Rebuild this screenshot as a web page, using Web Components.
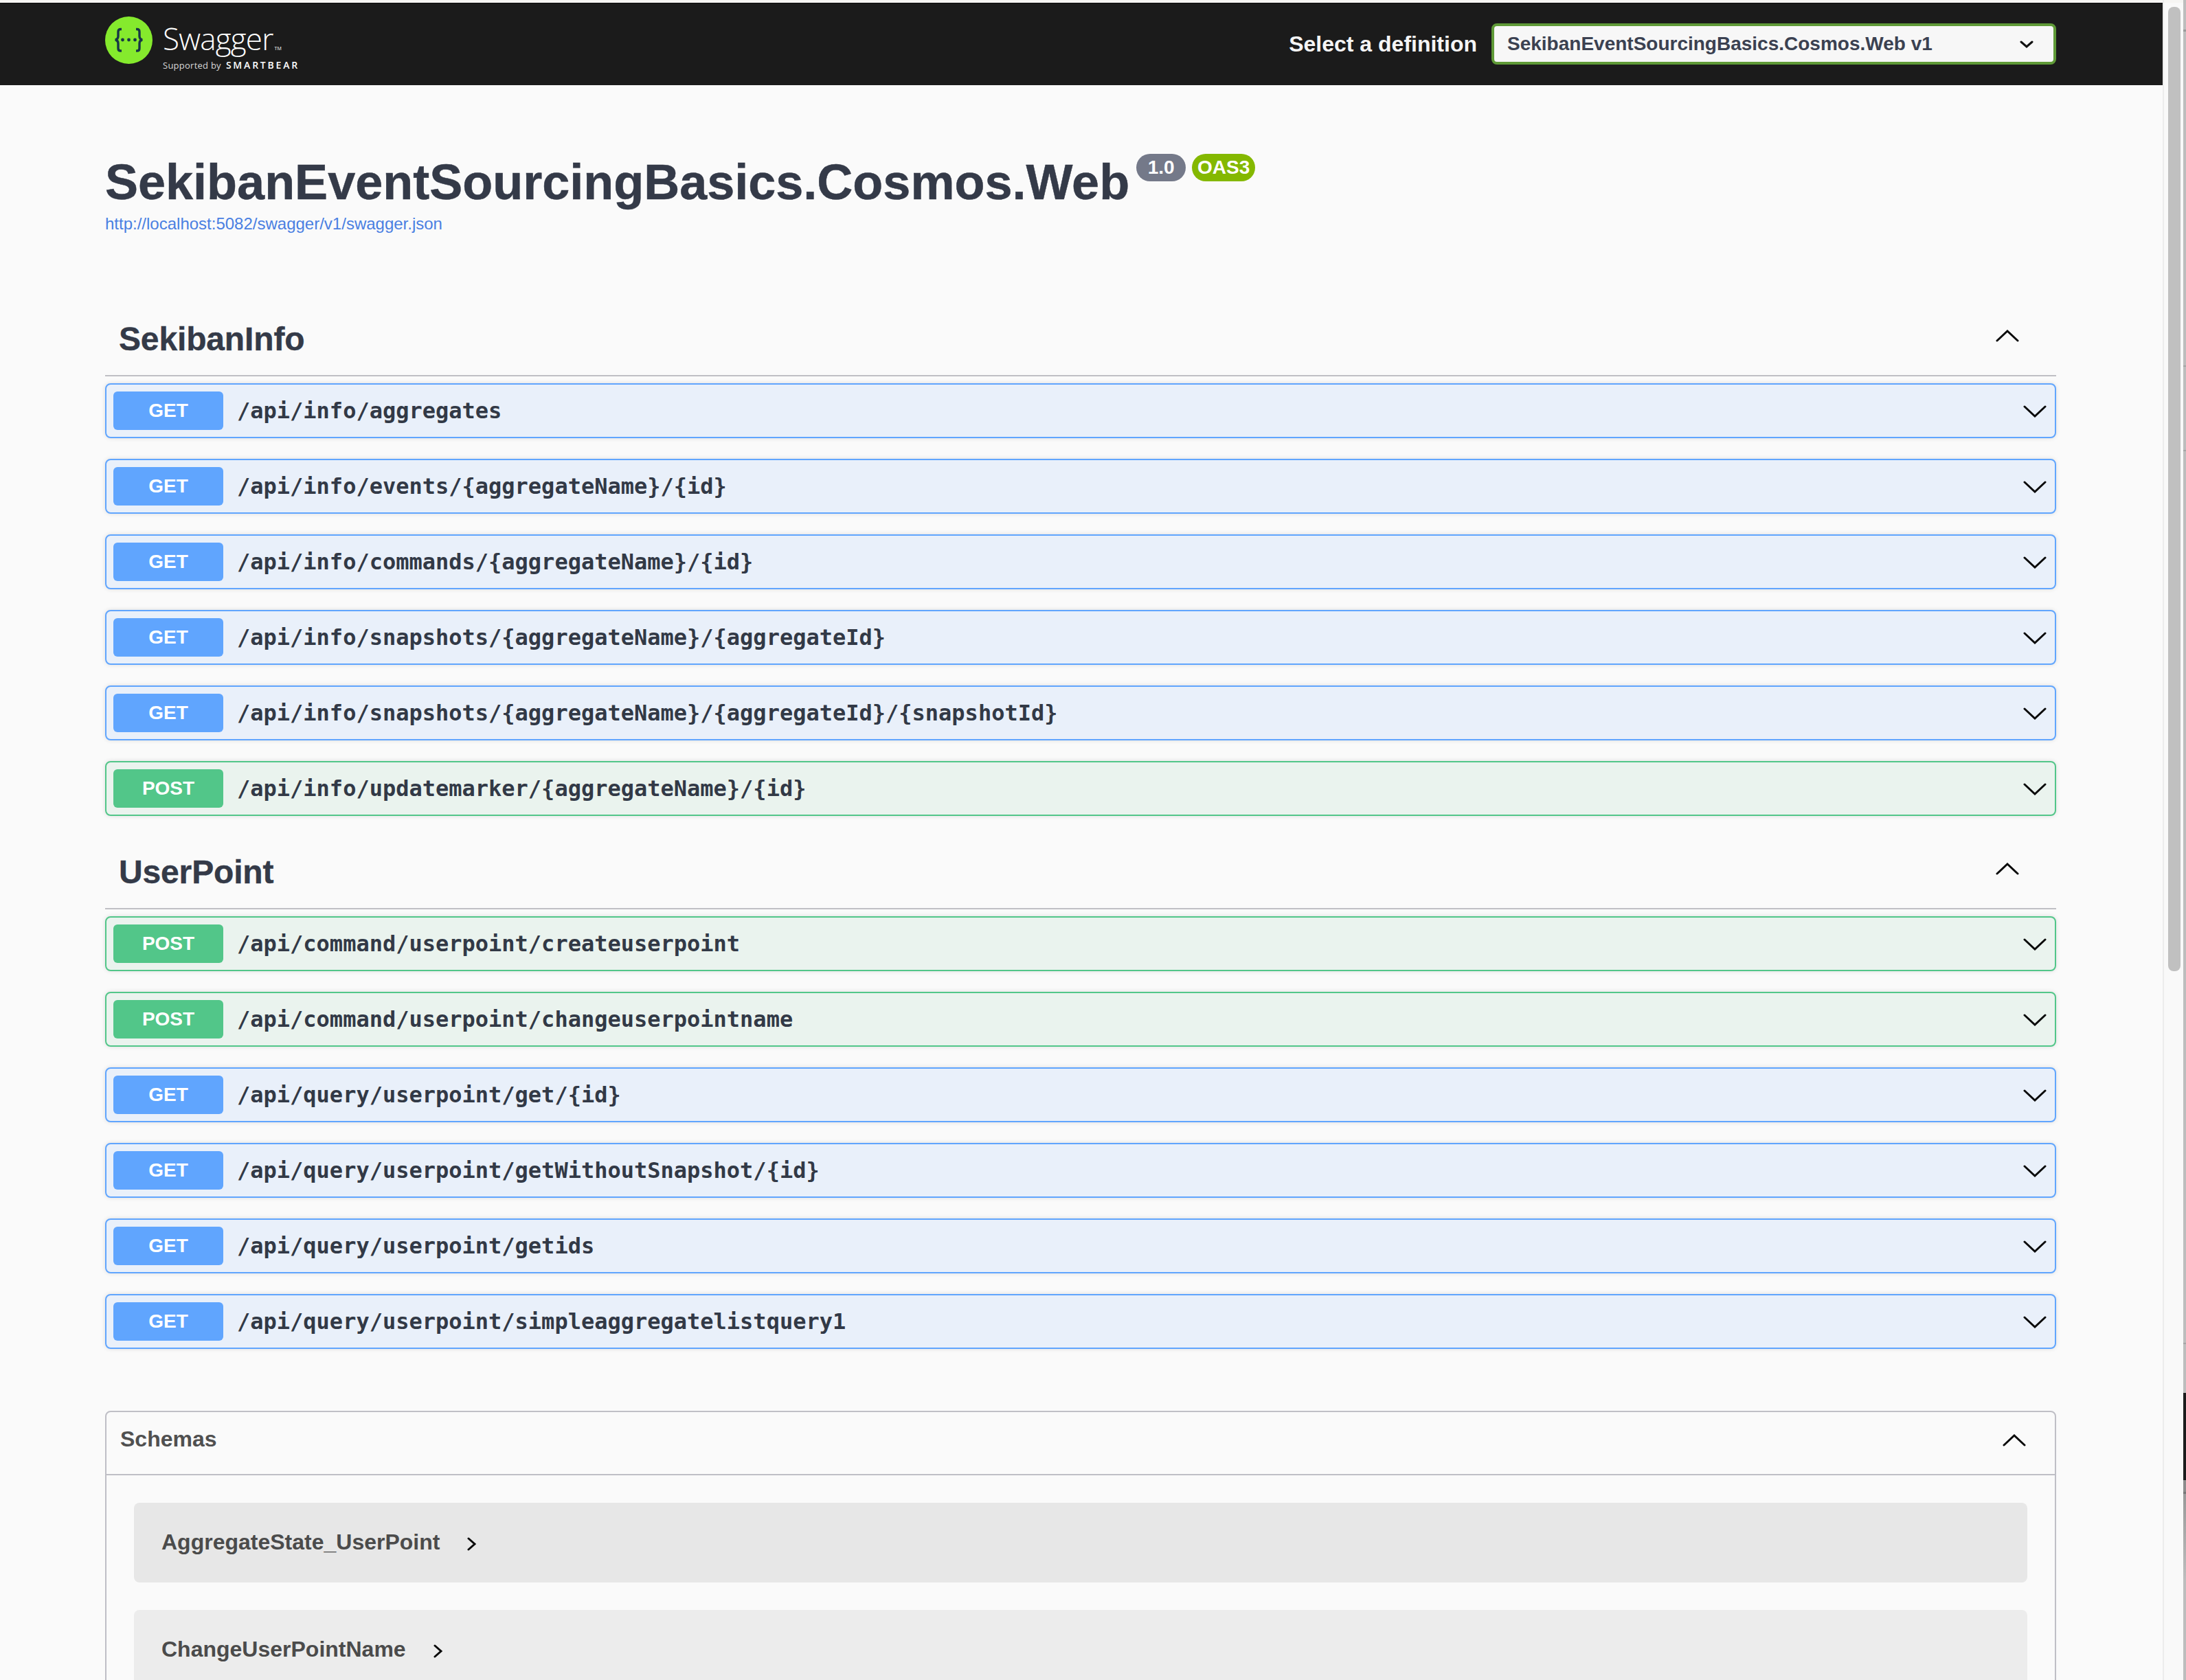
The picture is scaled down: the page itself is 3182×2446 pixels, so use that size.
<!DOCTYPE html>
<html lang="en">

<head>
    <meta charset="UTF-8">
    <title>Swagger UI</title>
    <style>
        html, body {
            margin: 0;
            height: 2446px;
            overflow: hidden;
            background: #fafafa;
        }

        body {
            display: flex;
            font-family: "Liberation Sans", Arial, sans-serif;
            color: #3b4151;
        }
    </style>
</head>

<body>
    <sw-main>
        <sw-topbar slot="top"></sw-topbar>
        <sw-info title-text="SekibanEventSourcingBasics.Cosmos.Web" version="1.0" spec="OAS3"
            url="http://localhost:5082/swagger/v1/swagger.json"></sw-info>

        <sw-tag name="SekibanInfo">
            <sw-op method="get">/api/info/aggregates</sw-op>
            <sw-op method="get">/api/info/events/{aggregateName}/{id}</sw-op>
            <sw-op method="get">/api/info/commands/{aggregateName}/{id}</sw-op>
            <sw-op method="get">/api/info/snapshots/{aggregateName}/{aggregateId}</sw-op>
            <sw-op method="get">/api/info/snapshots/{aggregateName}/{aggregateId}/{snapshotId}</sw-op>
            <sw-op method="post">/api/info/updatemarker/{aggregateName}/{id}</sw-op>
        </sw-tag>

        <sw-tag name="UserPoint">
            <sw-op method="post">/api/command/userpoint/createuserpoint</sw-op>
            <sw-op method="post">/api/command/userpoint/changeuserpointname</sw-op>
            <sw-op method="get">/api/query/userpoint/get/{id}</sw-op>
            <sw-op method="get">/api/query/userpoint/getWithoutSnapshot/{id}</sw-op>
            <sw-op method="get">/api/query/userpoint/getids</sw-op>
            <sw-op method="get">/api/query/userpoint/simpleaggregatelistquery1</sw-op>
        </sw-tag>

        <sw-schemas>
            <sw-model>AggregateState_UserPoint</sw-model>
            <sw-model light>ChangeUserPointName</sw-model>
        </sw-schemas>
    </sw-main>
    <sw-gutter></sw-gutter>

    <script>
        // chevron used by tags, rows and the schemas header
        const chevron = (dir) => {
            const pts = dir === 'up' ? '2,16 17,2 32,16' : '2,2 17,16 32,2';
            return `<svg width="34" height="18" viewBox="0 0 34 18" fill="none" stroke="#0a0a0a"
                stroke-width="3" stroke-linecap="round"><polyline points="${pts}"/></svg>`;
        };

        class SwElement extends HTMLElement {
            constructor() {
                super();
                this.attachShadow({ mode: 'open' });
            }
        }

        class SwMain extends SwElement {
            connectedCallback() {
                this.shadowRoot.innerHTML = `
                <style>
                    :host { display: block; flex: 1; min-width: 0; }
                    .wrap { padding: 0 155px 0 153px; }
                </style>
                <slot name="top"></slot>
                <div class="wrap"><slot></slot></div>`;
            }
        }

        class SwTopbar extends SwElement {
            connectedCallback() {
                this.shadowRoot.innerHTML = `
                <style>
                    :host {
                        display: flex;
                        box-sizing: border-box;
                        height: 124px;
                        align-items: center;
                        justify-content: space-between;
                        padding: 0 155px 0 153px;
                        background: #1b1b1b;
                        border-top: 4px solid #f6f5f3;
                        box-shadow: inset 0 1px 0 #0c0c0c;
                    }
                    .logo { display: flex; gap: 15px; height: 70px; color: #fff; margin-top: -10px; }
                    .mark { display: block; }
                    .words { font-family: "Open Sans", sans-serif; display: flex; flex-direction: column; }
                    .name { font-size: 44px; font-weight: 300; line-height: 48px; margin-top: 8px; letter-spacing: -0.8px; white-space: nowrap; }
                    .name sup { font-size: 7px; font-weight: 400; letter-spacing: 0; vertical-align: baseline; margin-left: 2px; }
                    .by { display: flex; align-items: baseline; gap: 7px; line-height: 14px; margin-top: -7px; white-space: nowrap; }
                    .sup { font-size: 13px; color: #d8d8d8; letter-spacing: 0.25px; }
                    .bear { font-size: 14px; font-weight: 600; letter-spacing: 2.8px; }
                    .picker { display: flex; align-items: center; gap: 21px; }
                    .label { font-size: 32px; font-weight: 700; color: #f5f5f5; white-space: nowrap; }
                    .select {
                        box-sizing: border-box;
                        display: flex;
                        align-items: center;
                        justify-content: space-between;
                        width: 822px;
                        height: 60px;
                        padding: 0 29px 0 19px;
                        background: #f7f7f7;
                        border: 4px solid #5f9a37;
                        border-radius: 8px;
                        font-size: 28px;
                        font-weight: 700;
                        color: #3b4151;
                    }
                </style>
                <div class="logo">
                    <svg class="mark" width="69" height="69" viewBox="0 0 69 69">
                        <circle cx="34.5" cy="34.5" r="34.5" fill="#85ea2d"/>
                        <g fill="none" stroke="#173646" stroke-width="3.4">
                            <path d="M24 18.5h-1.5c-2.5 0-3.5 1.4-3.5 3.8v6.5c0 3-1.4 4.6-4.2 5.2 2.8.6 4.2 2.2 4.2 5.2v7c0 2.4 1 3.8 3.5 3.8H24"/>
                            <path d="M45 18.5h1.5c2.5 0 3.5 1.4 3.5 3.8v6.5c0 3 1.4 4.6 4.2 5.2-2.8.6-4.2 2.2-4.2 5.2v7c0 2.4-1 3.8-3.5 3.8H45"/>
                        </g>
                        <g fill="#173646">
                            <circle cx="25.5" cy="34" r="2.4"/>
                            <circle cx="34.5" cy="34" r="2.4"/>
                            <circle cx="43.5" cy="34" r="2.4"/>
                        </g>
                    </svg>
                    <div class="words">
                        <div class="name">Swagger<sup>TM</sup></div>
                        <div class="by"><span class="sup">Supported by</span><span class="bear">SMARTBEAR</span></div>
                    </div>
                </div>
                <div class="picker">
                    <span class="label">Select a definition</span>
                    <div class="select">
                        <span>SekibanEventSourcingBasics.Cosmos.Web v1</span>
                        <svg width="20" height="11" viewBox="0 0 20 11" fill="none" stroke="#111" stroke-width="3" stroke-linecap="round"><polyline points="2,2 10,9 18,2"/></svg>
                    </div>
                </div>`;
            }
        }

        class SwInfo extends SwElement {
            connectedCallback() {
                this.shadowRoot.innerHTML = `
                <style>
                    :host { display: block; padding-top: 101px; height: 217px; }
                    .head { display: flex; align-items: flex-start; }
                    h2 { margin: 0; font-size: 72px; font-weight: 700; line-height: 80px; color: #343a48; white-space: nowrap; -webkit-text-stroke: .5px #343a48; }
                    .pill {
                        height: 40px;
                        margin-top: -1px;
                        padding: 0 8px;
                        border-radius: 20px;
                        color: #fff;
                        font-size: 28px;
                        font-weight: 700;
                        line-height: 40px;
                    }
                    .ver { margin-left: 10px; padding: 0 16.5px; background: #747989; }
                    .spec { margin-left: 9px; background: #84b800; }
                    a { display: block; margin-top: 6px; font-size: 24px; line-height: 30px; color: #4a80e2; text-decoration: none; }
                </style>
                <div class="head">
                    <h2>${this.getAttribute('title-text')}</h2>
                    <span class="pill ver">${this.getAttribute('version')}</span>
                    <span class="pill spec">${this.getAttribute('spec')}</span>
                </div>
                <a href="#">${this.getAttribute('url')}</a>`;
            }
        }

        class SwTag extends SwElement {
            connectedCallback() {
                this.shadowRoot.innerHTML = `
                <style>
                    :host { display: block; }
                    .head {
                        display: flex;
                        align-items: center;
                        justify-content: space-between;
                        height: 104px;
                        padding: 0 54px 0 20px;
                        border-bottom: 2px solid #bfbfc4;
                        margin-bottom: 10px;
                    }
                    h3 { margin: 0; font-size: 48px; font-weight: 700; line-height: 64px; color: #343a48; letter-spacing: -0.15px; -webkit-text-stroke: .4px #343a48; }
                    svg { margin-top: -10px; }
                </style>
                <div class="head">
                    <h3>${this.getAttribute('name')}</h3>
                    ${chevron('up')}
                </div>
                <slot></slot>`;
            }
        }

        class SwOp extends SwElement {
            connectedCallback() {
                const post = this.getAttribute('method') === 'post';
                this.shadowRoot.innerHTML = `
                <style>
                    :host {
                        display: flex;
                        align-items: center;
                        box-sizing: border-box;
                        height: 80px;
                        margin-bottom: 30px;
                        padding: 0 12px 0 10px;
                        border: 2px solid ${post ? '#52c689' : '#60a5fe'};
                        border-radius: 8px;
                        background: ${post ? '#eaf3ee' : '#e9f0fa'};
                        box-shadow: 0 0 6px rgba(0, 0, 0, .12);
                    }
                    .verb {
                        flex: none;
                        width: 160px;
                        height: 56px;
                        border-radius: 6px;
                        background: ${post ? '#52c689' : '#60a5fe'};
                        color: #fff;
                        font-size: 28px;
                        font-weight: 700;
                        line-height: 56px;
                        text-align: center;
                    }
                    .path {
                        flex: 1;
                        padding-left: 20px;
                        font-family: "DejaVu Sans Mono", monospace;
                        font-size: 32px;
                        font-weight: 600;
                        color: #323946;
                    }
                    svg { flex: none; margin-top: 1px; }
                </style>
                <span class="verb">${post ? 'POST' : 'GET'}</span>
                <span class="path"><slot></slot></span>
                ${chevron('down')}`;
            }
        }

        class SwSchemas extends SwElement {
            connectedCallback() {
                this.shadowRoot.innerHTML = `
                <style>
                    :host {
                        display: block;
                        margin-top: 90px;
                        border: 2px solid #bfbfc6;
                        border-radius: 8px 8px 0 0;
                    }
                    .head {
                        display: flex;
                        align-items: flex-start;
                        justify-content: space-between;
                        height: 90px;
                        padding: 0 42px 0 20px;
                        border-bottom: 2px solid #bfbfc6;
                        font-size: 32px;
                        font-weight: 700;
                        color: #505050;
                    }
                    .head span { margin-top: 21px; line-height: 36px; }
                    .head svg { margin-top: 32px; }
                    .body { display: flex; flex-direction: column; gap: 40px; padding: 40px; }
                </style>
                <div class="head">
                    <span>Schemas</span>
                    ${chevron('up')}
                </div>
                <div class="body"><slot></slot></div>`;
            }
        }

        class SwModel extends SwElement {
            connectedCallback() {
                this.shadowRoot.innerHTML = `
                <style>
                    :host {
                        display: flex;
                        align-items: center;
                        gap: 40px;
                        box-sizing: border-box;
                        height: 116px;
                        padding: 0 40px 2px;
                        border-radius: 8px;
                        background: ${this.hasAttribute('light') ? '#ececec' : '#e7e7e7'};
                        font-size: 32px;
                        font-weight: 700;
                        color: #4b4b4b;
                    }
                    svg { margin-top: 6px; }
                </style>
                <span><slot></slot></span>
                <svg width="13" height="20" viewBox="0 0 13 20" fill="none" stroke="#0a0a0a" stroke-width="3" stroke-linecap="round"><polyline points="2,2 11,10 2,18"/></svg>`;
            }
        }

        // browser scrollbar, plus the edge of the next window on the far right
        class SwGutter extends SwElement {
            connectedCallback() {
                this.shadowRoot.innerHTML = `
                <style>
                    :host {
                        display: flex;
                        flex: none;
                        box-sizing: border-box;
                        width: 34px;
                        height: 2446px;
                        background: #f9f9f9;
                        border-left: 2px solid #ececec;
                    }
                    .track { flex: 1; box-sizing: border-box; padding: 10px 4px 0 6px; border-top: 4px solid #f6f5f3; margin-top: 0; }
                    .thumb { height: 1404px; margin-top: -4px; border-radius: 8px; background: #c0c0c0; }
                    .edge {
                        flex: none;
                        width: 4px;
                        background: linear-gradient(to bottom,
                            #bdbdbd 0 43px, #9a9a9a 43px 46px, #bdbdbd 46px 532px, #a5a5a5 532px 534px,
                            #bdbdbd 534px 655px, #a5a5a5 655px 657px, #bdbdbd 657px 1955px, #a5a5a5 1955px 1957px,
                            #bdbdbd 1957px 2028px, #1c1c1c 2028px 2155px, #8c8c8c 2155px 2172px,
                            #777 2172px 2175px, #999 2175px, #bdbdbd 2300px);
                    }
                </style>
                <div class="track"><div class="thumb"></div></div>
                <div class="edge"></div>`;
            }
        }

        customElements.define('sw-main', SwMain);
        customElements.define('sw-topbar', SwTopbar);
        customElements.define('sw-info', SwInfo);
        customElements.define('sw-tag', SwTag);
        customElements.define('sw-op', SwOp);
        customElements.define('sw-schemas', SwSchemas);
        customElements.define('sw-model', SwModel);
        customElements.define('sw-gutter', SwGutter);
    </script>
</body>

</html>
